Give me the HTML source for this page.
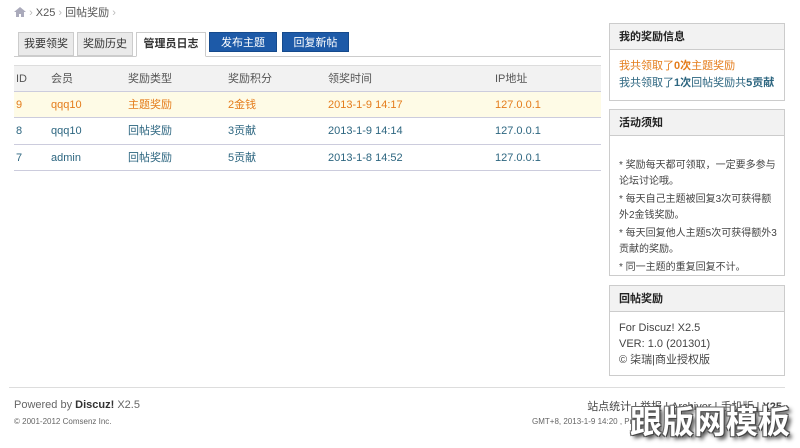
<!DOCTYPE html>
<html><head><meta charset="utf-8"><style>
*{margin:0;padding:0;box-sizing:border-box}
body{width:800px;height:448px;background:#fff;font-family:"Liberation Sans","Noto Sans CJK SC",sans-serif;font-size:11px;color:#333;position:relative;overflow:hidden}
.a{position:absolute}
.bc{left:14px;top:4px;color:#555;font-size:11px}
.tab{position:absolute;top:32px;height:24px;line-height:22px;text-align:center;font-size:11px;border:1px solid #ccc;background:#eaeaea;color:#333}
.btn{position:absolute;top:32px;height:20px;line-height:20px;text-align:center;color:#fff;background:#1d5aa8;border:1px solid #154a8c;font-size:11px}
.row{position:absolute;left:14px;width:587px;border-bottom:1px solid #ccd;}
.row span{position:absolute;top:0}
.side{position:absolute;left:609px;width:176px;border:1px solid #ccc}
.side h3{height:26px;line-height:26px;background:#f2f2f2;border-bottom:1px solid #ccc;font-size:11px;padding-left:9px;color:#222}
.or{color:#e47c1b}.bl{color:#336699}.tl{color:#2d6680}
</style></head><body>
<div class="a bc"><svg width="12" height="10" viewBox="0 0 12 10" style="vertical-align:-1px"><path d="M6 0L0 5h2v5h3V7h2v3h3V5h2z" fill="#aab"/></svg> <span style="color:#bbb">›</span> X25 <span style="color:#bbb">›</span> 回帖奖励 <span style="color:#bbb">›</span></div>
<div class="a" style="left:14px;top:56px;width:587px;border-top:1px solid #ccc"></div>
<div class="tab" style="left:18px;width:56px">我要领奖</div>
<div class="tab" style="left:77px;width:56px">奖励历史</div>
<div class="tab" style="left:136px;width:70px;background:#fff;border-bottom-color:#fff;font-weight:bold;height:25px">管理员日志</div>
<div class="btn" style="left:209px;width:68px">发布主题</div>
<div class="btn" style="left:282px;width:67px">回复新帖</div>
<div class="row" style="top:65px;height:27px;background:#f2f2f2;line-height:26px;border-top:1px solid #ddd;color:#555"><span style="left:2px">ID</span><span style="left:37px">会员</span><span style="left:114px">奖励类型</span><span style="left:214px">奖励积分</span><span style="left:314px">领奖时间</span><span style="left:481px">IP地址</span></div>
<div class="row or" style="top:92px;height:26px;background:#fefbe6;line-height:26px"><span style="left:2px">9</span><span style="left:37px">qqq10</span><span style="left:114px">主题奖励</span><span style="left:214px">2金钱</span><span style="left:314px">2013-1-9 14:17</span><span style="left:481px">127.0.0.1</span></div>
<div class="row tl" style="top:118px;height:27px;line-height:26px"><span style="left:2px">8</span><span style="left:37px">qqq10</span><span style="left:114px">回帖奖励</span><span style="left:214px">3贡献</span><span style="left:314px">2013-1-9 14:14</span><span style="left:481px">127.0.0.1</span></div>
<div class="row tl" style="top:145px;height:26px;line-height:26px"><span style="left:2px">7</span><span style="left:37px">admin</span><span style="left:114px">回帖奖励</span><span style="left:214px">5贡献</span><span style="left:314px">2013-1-8 14:52</span><span style="left:481px">127.0.0.1</span></div>

<div class="side" style="top:23px;height:78px"><h3>我的奖励信息</h3><div style="padding:8px 9px;line-height:17px"><div class="or">我共领取了<b>0次</b>主题奖励</div><div class="tl">我共领取了<b>1次</b>回帖奖励共<b>5贡献</b></div></div></div>
<div class="side" style="top:109px;height:167px"><h3>活动须知</h3><div style="padding:22px 6px 0 9px;line-height:16px;color:#444;font-size:10px"><p>* 奖励每天都可领取，一定要多参与论坛讨论哦。</p><p style="margin-top:2px">* 每天自己主题被回复3次可获得额外2金钱奖励。</p><p style="margin-top:2px">* 每天回复他人主题5次可获得额外3贡献的奖励。</p><p style="margin-top:2px">* 同一主题的重复回复不计。</p></div></div>
<div class="side" style="top:285px;height:91px"><h3>回帖奖励</h3><div style="padding:8px 9px;line-height:16px;color:#444">For Discuz! X2.5<br>VER: 1.0 (201301)<br>© 柒瑞|商业授权版</div></div>

<div class="a" style="left:9px;top:387px;width:776px;border-top:1px solid #ddd"></div>
<div class="a" style="left:14px;top:399px;color:#666">Powered by <b style="color:#333">Discuz!</b> X2.5</div>
<div class="a" style="left:14px;top:417px;font-size:8px;color:#666">© 2001-2012 Comsenz Inc.</div>
<div class="a" style="right:18px;top:398px;color:#444">站点统计 | 举报 | Archiver | 手机版 | <b>X25</b></div>
<div class="a" style="left:532px;top:417px;font-size:8px;color:#666">GMT+8, 2013-1-9 14:20 , Pro</div>
<div class="a" style="left:630px;top:404px;font-size:32px;font-weight:bold;color:#fff;line-height:36px;width:180px;transform-origin:0 0;transform:scaleX(1.0);text-shadow:1px 1px 0 #444,-1px -1px 0 #666,1px -1px 0 #555,-1px 1px 0 #555,3px 3px 4px #333">跟版网模板</div>
</body></html>
